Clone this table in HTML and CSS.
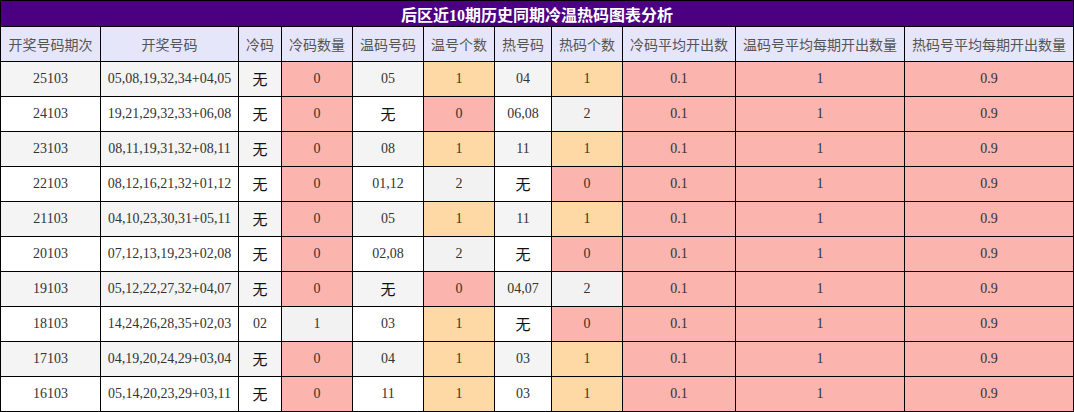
FILE: index.html
```html
<!DOCTYPE html>
<html lang="zh-CN">
<head>
<meta charset="utf-8">
<title>后区近10期历史同期冷温热码图表分析</title>
<link rel="stylesheet" href="styles.css">
</head>
<body>
<table class="chart">
  <colgroup>
    <col class="c-issue"><col class="c-nums"><col class="c-cold"><col class="c-n">
    <col class="c-n"><col class="c-n"><col class="c-hot"><col class="c-n">
    <col class="c-avg1"><col class="c-avg2"><col class="c-avg2">
  </colgroup>
  <thead>
    <tr class="title-row"><th colspan="11">后区近10期历史同期冷温热码图表分析</th></tr>
    <tr class="head-row">
      <th>开奖号码期次</th><th>开奖号码</th><th>冷码</th><th>冷码数量</th><th>温码号码</th><th>温号个数</th><th>热号码</th><th>热码个数</th><th>冷码平均开出数</th><th>温码号平均每期开出数量</th><th>热码号平均每期开出数量</th>
    </tr>
  </thead>
  <tbody>
    <tr class="alt"><td>25103</td><td>05,08,19,32,34+04,05</td><td class="none">无</td><td class="pink">0</td><td>05</td><td class="orange">1</td><td>04</td><td class="orange">1</td><td class="pink">0.1</td><td class="pink">1</td><td class="pink">0.9</td></tr>
    <tr><td>24103</td><td>19,21,29,32,33+06,08</td><td class="none">无</td><td class="pink">0</td><td class="none">无</td><td class="pink">0</td><td>06,08</td><td class="gray">2</td><td class="pink">0.1</td><td class="pink">1</td><td class="pink">0.9</td></tr>
    <tr class="alt"><td>23103</td><td>08,11,19,31,32+08,11</td><td class="none">无</td><td class="pink">0</td><td>08</td><td class="orange">1</td><td>11</td><td class="orange">1</td><td class="pink">0.1</td><td class="pink">1</td><td class="pink">0.9</td></tr>
    <tr><td>22103</td><td>08,12,16,21,32+01,12</td><td class="none">无</td><td class="pink">0</td><td>01,12</td><td class="gray">2</td><td class="none">无</td><td class="pink">0</td><td class="pink">0.1</td><td class="pink">1</td><td class="pink">0.9</td></tr>
    <tr class="alt"><td>21103</td><td>04,10,23,30,31+05,11</td><td class="none">无</td><td class="pink">0</td><td>05</td><td class="orange">1</td><td>11</td><td class="orange">1</td><td class="pink">0.1</td><td class="pink">1</td><td class="pink">0.9</td></tr>
    <tr><td>20103</td><td>07,12,13,19,23+02,08</td><td class="none">无</td><td class="pink">0</td><td>02,08</td><td class="gray">2</td><td class="none">无</td><td class="pink">0</td><td class="pink">0.1</td><td class="pink">1</td><td class="pink">0.9</td></tr>
    <tr class="alt"><td>19103</td><td>05,12,22,27,32+04,07</td><td class="none">无</td><td class="pink">0</td><td class="none">无</td><td class="pink">0</td><td>04,07</td><td class="gray">2</td><td class="pink">0.1</td><td class="pink">1</td><td class="pink">0.9</td></tr>
    <tr><td>18103</td><td>14,24,26,28,35+02,03</td><td>02</td><td class="gray">1</td><td>03</td><td class="orange">1</td><td class="none">无</td><td class="pink">0</td><td class="pink">0.1</td><td class="pink">1</td><td class="pink">0.9</td></tr>
    <tr class="alt"><td>17103</td><td>04,19,20,24,29+03,04</td><td class="none">无</td><td class="pink">0</td><td>04</td><td class="orange">1</td><td>03</td><td class="orange">1</td><td class="pink">0.1</td><td class="pink">1</td><td class="pink">0.9</td></tr>
    <tr><td>16103</td><td>05,14,20,23,29+03,11</td><td class="none">无</td><td class="pink">0</td><td>11</td><td class="orange">1</td><td>03</td><td class="orange">1</td><td class="pink">0.1</td><td class="pink">1</td><td class="pink">0.9</td></tr>
  </tbody>
</table>
</body>
</html>
```

FILE: styles.css
```css
html, body {
  margin: 0;
  padding: 0;
  background: #fff;
}

.chart {
  width: 1074px;
  border-collapse: collapse;
  table-layout: fixed;
  font-family: "Liberation Serif", "Noto Sans CJK SC", serif;
  font-size: 14px;
  color: #333;
}

.c-issue { width: 100px; }
.c-nums { width: 138px; }
.c-cold { width: 43px; }
.c-n { width: 71px; }
.c-hot { width: 57px; }
.c-avg1 { width: 113px; }
.c-avg2 { width: 169px; }

.chart th,
.chart td {
  border: 1px solid #000;
  padding: 0;
  text-align: center;
  vertical-align: middle;
  white-space: nowrap;
  overflow: hidden;
}

.title-row th {
  height: 25px;
  background: #4b0082;
  color: #fff;
  font-size: 16px;
  font-weight: bold;
}

.head-row th {
  height: 34px;
  background: #e6e6fa;
  color: #555;
  font-weight: normal;
  font-size: 14px;
}

.chart td {
  height: 34px;
  background: #fff;
}

.chart tr.alt td {
  background: #f4f4f4;
}

.chart td.none {
  height: 32px;
  padding-top: 2px;
  color: #111;
  font-size: 15px;
  line-height: 20px;
}

.chart td.pink,
.chart tr.alt td.pink {
  background: #fbb4ae;
}

.chart td.orange,
.chart tr.alt td.orange {
  background: #fed9a6;
}

.chart td.gray,
.chart tr.alt td.gray {
  background: #f2f2f2;
}
```
